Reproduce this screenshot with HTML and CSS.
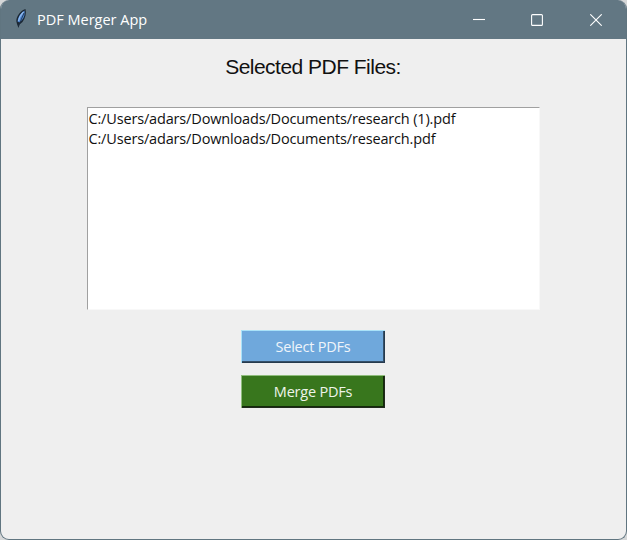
FILE: index.html
```html
<!DOCTYPE html>
<html lang="en">
<head>
<meta charset="utf-8">
<title>PDF Merger App</title>
<link rel="stylesheet" href="styles.css">
</head>
<body>
<div class="window">
  <header class="titlebar">
    <svg class="feather" width="14" height="22" viewBox="0 0 14 22">
      <path d="M12.500 1C7.500 2.500 3.500 8 3.300 13L4 16L5.500 20L6.500 16.500L9.500 14C12.500 10 13.500 5 12.500 1Z" fill="#1b2733"/>
      <path d="M11.500 2.500C7.500 5 5 9 4.500 13.500L6.500 14.500L9 12C11.500 9 12 6 11.500 2.500Z" fill="#4f86cf"/>
      <path d="M10.500 4C7.500 7 6 10 5.500 13" stroke="#8db8ee" stroke-width="1.200" fill="none"/>
      <path d="M11 5L5.500 18" stroke="#1c2c42" stroke-width=".8"/>
    </svg>
    <h1 class="caption">PDF Merger App</h1>
    <div class="controls">
      <svg width="12" height="12" viewBox="0 0 12 12"><path d="M0 5.500H12"/></svg>
      <svg width="12" height="12" viewBox="0 0 12 12"><rect x=".6" y=".6" width="10.800" height="10.800" rx="1"/></svg>
      <svg width="12" height="12" viewBox="0 0 12 12"><path d="M.3 .3L11.700 11.700M11.700 .3L.3 11.700"/></svg>
    </div>
  </header>
  <main class="content">
    <h2 class="heading">Selected PDF Files:</h2>
    <ul class="files">
      <li>C:/Users/adars/Downloads/Documents/research (1).pdf</li>
      <li>C:/Users/adars/Downloads/Documents/research.pdf</li>
    </ul>
    <button class="button select">Select PDFs</button>
    <button class="button merge">Merge PDFs</button>
  </main>
</div>
</body>
</html>
```
FILE: styles.css
```css
* { box-sizing: border-box; }
body {
  margin: 0;
  background: #d5d7d8;
  font-family: "Open Sans", "Noto Sans", sans-serif;
}
.window {
  display: flex;
  flex-direction: column;
  height: 540px;
  border: 1px solid #607580;
  border-top: 0;
  border-radius: 9px;
  overflow: hidden;
  background: #efefef;
}
.titlebar {
  display: flex;
  align-items: center;
  flex: none;
  height: 39px;
  padding: 0 24px 0 12px;
  background: #627783;
  color: #fff;
}
.feather { margin-top: -2px; }
.caption {
  margin: 0 0 0 10px;
  font-size: 14.500px;
  font-weight: 400;
  letter-spacing: 0;
  white-space: nowrap;
}
.controls {
  display: flex;
  gap: 46px 47px;
  margin-left: auto;
}
.controls svg {
  fill: none;
  stroke: #fff;
  stroke-width: 1.100;
}
.controls svg:nth-child(2) { margin-left: -1px; }
.content {
  display: flex;
  flex-direction: column;
  align-items: center;
  padding-right: 1px;
}
.heading {
  margin: 15px 0 0;
  font: 400 21px/26px "Liberation Sans", Arial, sans-serif;
  letter-spacing: -0.520px;
  color: #111;
}
.files {
  width: 453px;
  height: 203px;
  margin: 27px 0 20px;
  padding: 1px 0 0 1px;
  list-style: none;
  background: #fff;
  border: 1px solid #f8f8f8;
  border-top: 1px solid #a0a0a0;
  border-left: 1px solid #a0a0a0;
  font-size: 14.500px;
  line-height: 20px;
  letter-spacing: -0.160px;
  color: #111;
}
.button {
  width: 144px;
  height: 33px;
  margin-bottom: 12px;
  padding: 0;
  border: 0;
  font: 14.500px/30px "Open Sans", "Noto Sans", sans-serif;
  letter-spacing: -0.220px;
}
.select {
  background: #6fa8dc;
  color: #eef4fa;
  box-shadow: inset 1px 1px #a9e2f9, inset -1px -1px #263a4d, inset -2px -2px #35506a;
}
.merge {
  background: #38761d;
  color: #eef4ea;
  box-shadow: inset 1px 1px #8fbd7c, inset -1px -1px #202a1c, inset -2px -2px #142b0a;
}
```
